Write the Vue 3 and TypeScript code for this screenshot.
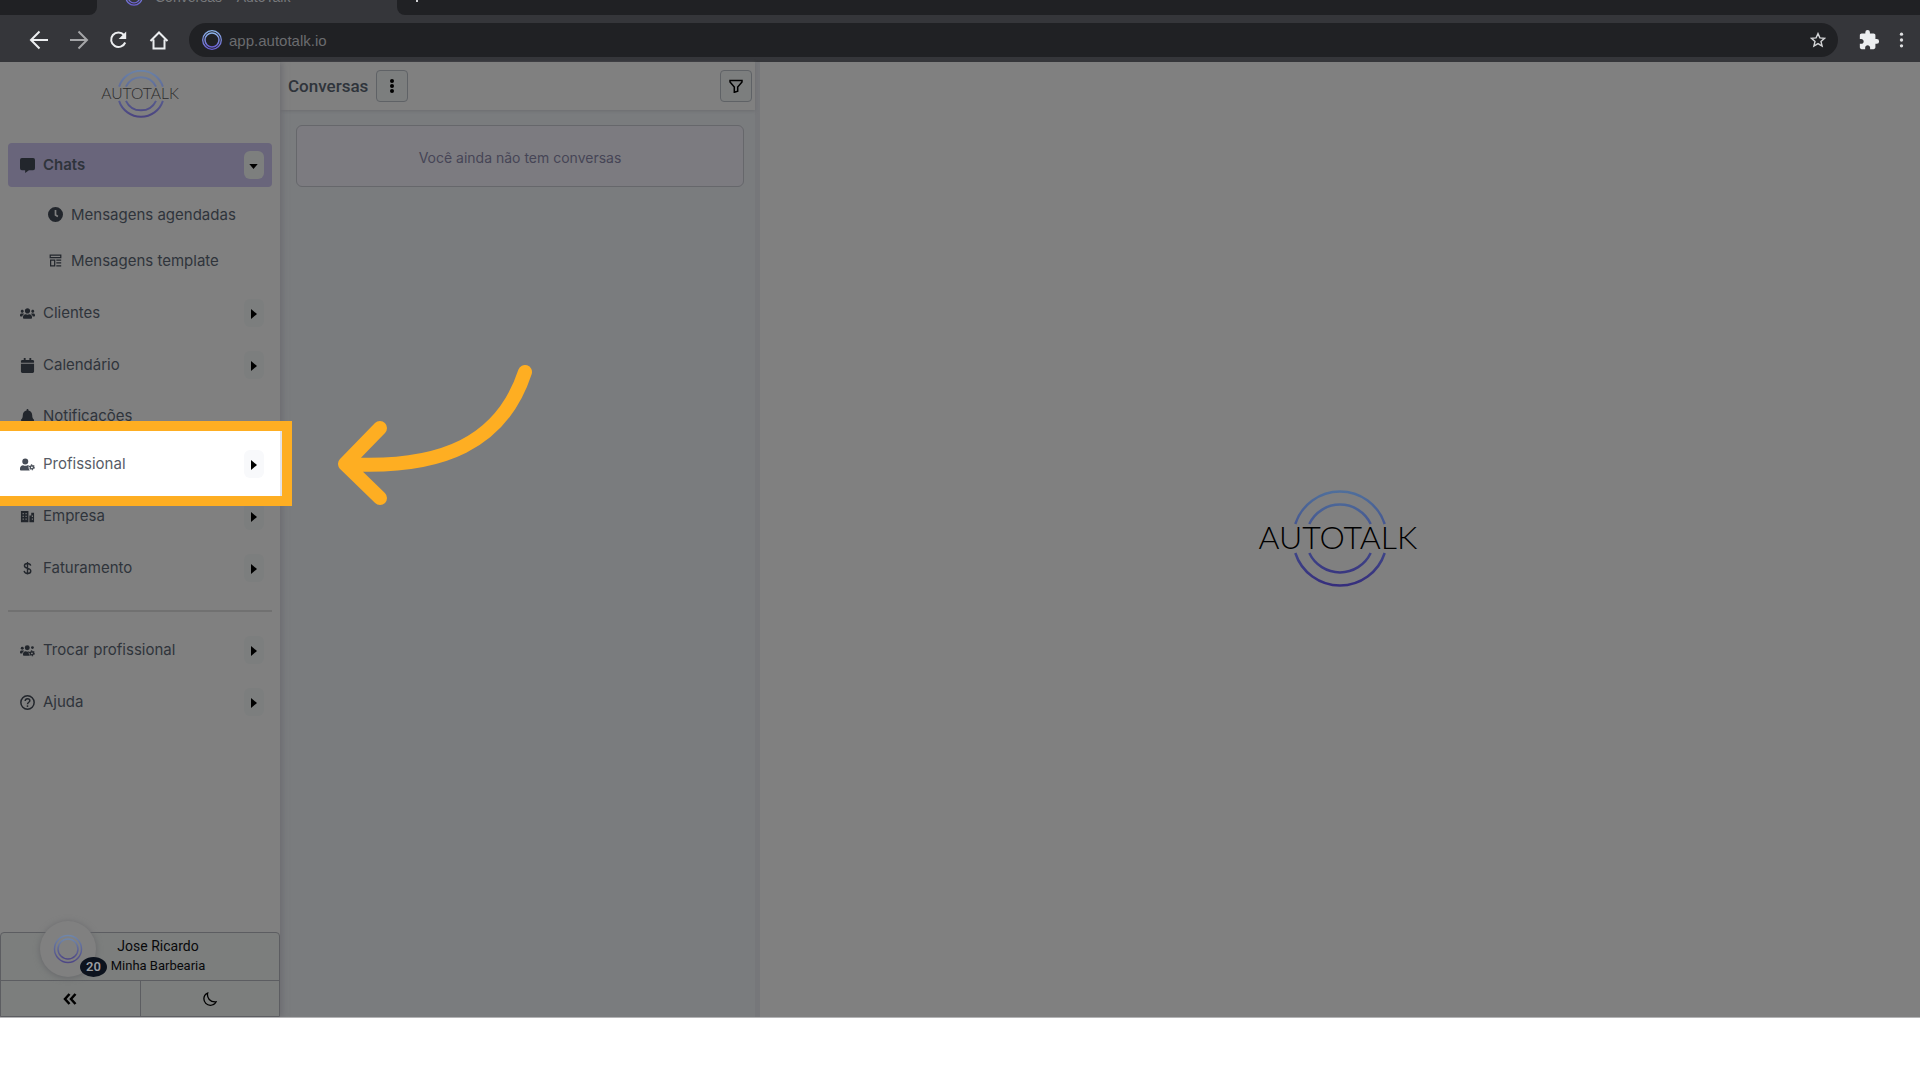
<script setup lang="ts">
import { ref } from 'vue'

interface MenuItem {
  label: string
  icon: string
  arrow: boolean
  spotlight?: boolean
}

const gear =
  '<circle cx="508" cy="376" r="68" fill="none" stroke="currentColor" stroke-width="56"/><circle cx="508" cy="376" r="106" fill="none" stroke="currentColor" stroke-width="44" stroke-dasharray="56 55"/>'

const icons: Record<string, { box: string; body: string }> = {
  chat: {
    box: '0 0 16 16',
    body: '<path d="M2 0h12a2 2 0 0 1 2 2v9a2 2 0 0 1-2 2H9.500L5.500 16v-3H2a2 2 0 0 1-2-2V2a2 2 0 0 1 2-2z"/>',
  },
  clock: {
    box: '0 0 16 16',
    body: '<path fill-rule="evenodd" d="M16 8A8 8 0 1 1 0 8a8 8 0 0 1 16 0zM7.100 3.200V9l3 1.800.9-1.500L8.900 8V3.200z"/>',
  },
  template: {
    box: '0 0 16 16',
    body: '<path fill="none" stroke="currentColor" stroke-width="1.500" d="M1.500 1.500h13v3h-13zM2 7.500h5v7H2zM9 7.500h6M9 11h6M9 14.500h6"/>',
  },
  users: {
    box: '0 0 640 512',
    body: '<path d="M96 224c35.300 0 64-28.700 64-64s-28.700-64-64-64-64 28.700-64 64 28.700 64 64 64zm448 0c35.300 0 64-28.700 64-64s-28.700-64-64-64-64 28.700-64 64 28.700 64 64 64zm32 32h-64c-17.600 0-33.500 7.100-45.100 18.600 40.300 22.100 68.900 62 75.100 109.400h66c17.700 0 32-14.300 32-32v-32c0-35.300-28.700-64-64-64zm-256 0c61.900 0 112-50.100 112-112S381.900 32 320 32 208 82.100 208 144s50.100 112 112 112zm76.800 32h-8.300c-20.800 10-43.900 16-68.500 16s-47.600-6-68.500-16h-8.300C179.600 288 128 339.600 128 403.200V432c0 26.500 21.500 48 48 48h288c26.500 0 48-21.500 48-48v-28.800c0-63.600-51.600-115.200-115.200-115.200zm-223.700-13.400C161.500 263.100 145.600 256 128 256H64c-35.300 0-64 28.700-64 64v32c0 17.700 14.300 32 32 32h65.900c6.300-47.400 34.900-87.300 75.200-109.400z"/>',
  },
  calendar: {
    box: '0 0 448 512',
    body: '<path d="M12 192h424c6.600 0 12 5.400 12 12v260c0 26.500-21.500 48-48 48H48c-26.500 0-48-21.500-48-48V204c0-6.600 5.400-12 12-12zm436-44v-36c0-26.500-21.500-48-48-48h-48V12c0-6.600-5.400-12-12-12h-40c-6.600 0-12 5.400-12 12v52H160V12c0-6.600-5.400-12-12-12h-40c-6.600 0-12 5.400-12 12v52H48c-26.500 0-48 21.500-48 48v36c0 6.600 5.400 12 12 12h424c6.600 0 12-5.400 12-12z"/>',
  },
  bell: {
    box: '0 0 448 512',
    body: '<path d="M224 512c35.300 0 64-28.700 64-64H160c0 35.300 28.700 64 64 64zm215.400-149.700c-19.300-20.800-55.500-52-55.500-154.300 0-77.700-54.500-139.900-127.900-155.200V32c0-17.700-14.300-32-32-32s-32 14.300-32 32v20.800C118.600 68.100 64.100 130.300 64.100 208c0 102.300-36.200 133.500-55.500 154.300-6 6.400-8.700 14.100-8.600 21.700.1 16.400 13 32 32.100 32h383.800c19.100 0 32-15.600 32.100-32 .1-7.600-2.600-15.300-8.600-21.700z"/>',
  },
  userGear: {
    box: '0 0 640 512',
    body:
      '<path d="M224 256a128 128 0 1 0 0-256 128 128 0 0 0 0 256zm-90 32C60 288 0 348 0 422v42c0 27 22 48 48 48h370c-28-30-52-78-52-136 0-34 6-60 16-82-20-6-40-6-60-6-62 30-136 28-188 0z"/>' +
      gear,
  },
  building: {
    box: '0 0 16 16',
    body: '<path fill-rule="evenodd" d="M1 2h8v12H1zM2.800 4.200v1.400H4V4.200zM5.900 4.200v1.400h1.200V4.200zM2.800 7.200v1.400H4V7.200zM5.900 7.200v1.400h1.200V7.200zM2.800 10.200v1.400H4v-1.400zM5.900 10.200v1.400h1.200v-1.400zM10 7h2V4h3v10h-5zM12.600 7v1.400h1.200V7zM12.600 10.200v1.400h1.200v-1.400z"/>',
  },
  dollar: {
    box: '0 0 16 16',
    body: '<path fill="none" stroke="currentColor" stroke-width="1.500" d="M8 1v13.500M11.400 5C11 3.200 9.800 2.600 8 2.600 6 2.600 4.700 3.500 4.700 5.100c0 3.800 6.800 1.800 6.800 5.500 0 1.700-1.400 2.700-3.500 2.700-2 0-3.300-.8-3.600-2.700"/>',
  },
  usersGear: {
    box: '0 0 640 512',
    body:
      '<circle cx="96" cy="160" r="62"/><circle cx="310" cy="134" r="106"/><circle cx="530" cy="130" r="60"/><path d="M64 256h64c18 0 34 7 45 19-40 22-69 62-75 109H32c-18 0-32-14-32-32v-32c0-35 29-64 64-64zM243 288c50 22 100 20 140 2-20 60-18 130 34 190H176c-26 0-48-21-48-48v-29c0-64 52-115 115-115z"/>' +
      gear,
  },
  help: {
    box: '0 0 16 16',
    body: '<g fill="none" stroke="currentColor" stroke-width="1.600"><circle cx="8" cy="8" r="7.100"/><path d="M5.500 6.400C5.600 4.800 6.500 4 8 4s2.500.8 2.500 2.100C10.500 7.800 8 7.700 8 9.800"/></g><circle cx="8" cy="11.800" r="1"/>',
  },
}

const subItems = [
  { label: 'Mensagens agendadas', icon: 'clock' },
  { label: 'Mensagens template', icon: 'template' },
]

const mainItems: MenuItem[] = [
  { label: 'Clientes', icon: 'users', arrow: true },
  { label: 'Calendário', icon: 'calendar', arrow: true },
  { label: 'Notificações', icon: 'bell', arrow: false },
  { label: 'Profissional', icon: 'userGear', arrow: true, spotlight: true },
  { label: 'Empresa', icon: 'building', arrow: true },
  { label: 'Faturamento', icon: 'dollar', arrow: true },
]

const extraItems: MenuItem[] = [
  { label: 'Trocar profissional', icon: 'usersGear', arrow: true },
  { label: 'Ajuda', icon: 'help', arrow: true },
]

const groups = [mainItems, extraItems]
const address = ref('app.autotalk.io')
</script>

<template>
  <div class="page">
    <svg class="defs" aria-hidden="true">
      <defs>
        <linearGradient id="ringBright" x1="0" y1="0" x2="0" y2="1">
          <stop offset="0" stop-color="#8db4ea" />
          <stop offset="1" stop-color="#6a5fd0" />
        </linearGradient>
        <linearGradient id="ringSoft" x1="0" y1="0" x2="0" y2="1">
          <stop offset="0" stop-color="#6f86aa" />
          <stop offset="1" stop-color="#4e4785" />
        </linearGradient>
        <linearGradient id="ringDeep" gradientUnits="userSpaceOnUse" x1="0" y1="0" x2="0" y2="97">
          <stop offset="0" stop-color="#4f6f9c" />
          <stop offset="1" stop-color="#352d7c" />
        </linearGradient>
        <linearGradient id="ringSmall" gradientUnits="userSpaceOnUse" x1="0" y1="0" x2="0" y2="97">
          <stop offset="0" stop-color="#6b83a8" />
          <stop offset="1" stop-color="#4a437f" />
        </linearGradient>
      </defs>
    </svg>

    <header class="browser">
      <div class="tabs">
        <div class="tab-left"></div>
        <div class="tab-active">
          <svg class="tab-icon" viewBox="0 0 20 20" fill="none" stroke="url(#ringBright)">
            <circle cx="10" cy="10" r="9" stroke-width="1.500" />
            <circle cx="10" cy="10" r="6.500" stroke-width="1.500" />
          </svg>
          <span>Conversas – AutoTalk</span>
        </div>
        <div class="tab-rest">
          <svg viewBox="0 0 14 14" width="14" height="14" stroke="#d0d1d3" stroke-width="2"><path d="M7 0v14M0 7h14" /></svg>
        </div>
      </div>
      <div class="toolbar">
        <button class="nav" aria-label="Voltar">
          <svg viewBox="0 0 20 20"><path d="M19 10H2.500M10.500 1.500L2 10l8.500 8.500" /></svg>
        </button>
        <button class="nav dim" aria-label="Avançar">
          <svg viewBox="0 0 20 20"><path d="M1 10h16.500M9.500 1.500L18 10l-8.500 8.500" /></svg>
        </button>
        <button class="nav" aria-label="Recarregar">
          <svg viewBox="0 0 20 20"><path d="M15 5A7.300 7.300 0 1 0 16.200 12.500" /><path class="solid" d="M17.200 1.500v7.500H9.700z" /></svg>
        </button>
        <button class="nav" aria-label="Página inicial">
          <svg viewBox="0 0 20 20"><path d="M4.500 9.500v9h11v-9M1.500 11L10 2.500l8.500 8.500" /></svg>
        </button>
        <label class="omnibox">
          <svg class="site" viewBox="0 0 20 20" fill="none" stroke="url(#ringBright)">
            <circle cx="10" cy="10" r="9.300" stroke-width="1.300" />
            <circle cx="10" cy="10" r="7" stroke-width="1.500" />
          </svg>
          <input v-model="address" type="text" aria-label="Endereço" />
          <svg class="star" viewBox="0 0 16 16"><path d="M8 1.600l1.900 4.300 4.600.4-3.500 3.100 1.100 4.600L8 11.600 3.900 14 5 9.400 1.500 6.300l4.600-.4z" /></svg>
        </label>
        <svg class="puzzle" viewBox="0 0 24 24"><path d="M20.500 11H19V7c0-1.100-.9-2-2-2h-4V3.500a2.500 2.500 0 0 0-5 0V5H4c-1.100 0-2 .9-2 2v3.800h1.500c1.500 0 2.700 1.200 2.700 2.700S5 16.200 3.500 16.200H2V20c0 1.100.9 2 2 2h3.800v-1.500c0-1.500 1.200-2.700 2.700-2.700s2.700 1.200 2.700 2.700V22H17c1.100 0 2-.9 2-2v-4h1.500a2.500 2.500 0 0 0 0-5z" /></svg>
        <svg class="kebab" viewBox="0 0 6 20"><circle cx="3" cy="3" r="2" /><circle cx="3" cy="10" r="2" /><circle cx="3" cy="17" r="2" /></svg>
      </div>
    </header>

    <div class="app">
      <aside class="sidebar">
        <svg class="logo small" viewBox="0 0 160 98" role="img" aria-label="Autotalk">
          <g fill="none" stroke="url(#ringSmall)" stroke-width="4">
            <path d="M37.300 34A47 47 0 0 1 126.700 34M51.300 34A34 34 0 0 1 112.700 34M37.300 63A47 47 0 0 0 126.700 63M51.300 63A34 34 0 0 0 112.700 63" />
          </g>
          <text x="80" y="59" text-anchor="middle">AUTOTALK</text>
        </svg>

        <nav class="menu">
          <a class="item active" href="#chats">
            <svg class="icon" :viewBox="icons.chat.box" v-html="icons.chat.body"></svg>
            <span class="label">Chats</span>
            <button class="toggle" aria-label="Recolher Chats">
              <svg viewBox="0 0 10 6" width="9" height="5"><path d="M0 0h10L5 6z" /></svg>
            </button>
          </a>
          <div class="sub">
            <a v-for="s in subItems" :key="s.label" class="sub-item" href="#mensagens">
              <svg class="icon" :class="s.icon" :viewBox="icons[s.icon].box" v-html="icons[s.icon].body"></svg>
              <span class="label">{{ s.label }}</span>
            </a>
          </div>
          <template v-for="(group, g) in groups" :key="g">
            <hr v-if="g > 0" />
            <a
              v-for="m in group"
              :key="m.label"
              class="item"
              :class="{ spotlight: m.spotlight, short: !m.arrow }"
              href="#menu"
            >
              <svg class="icon" :class="m.icon" :viewBox="icons[m.icon].box" v-html="icons[m.icon].body"></svg>
              <span class="label">{{ m.label }}</span>
              <button v-if="m.arrow" class="toggle" :aria-label="'Expandir ' + m.label">
                <svg viewBox="0 0 6 10" width="6" height="10"><path d="M0 0v10l6-5z" /></svg>
              </button>
            </a>
          </template>
        </nav>

        <div class="account">
          <div class="profile">
            <button class="bubble" aria-label="Novidades">
              <svg viewBox="0 0 30 30" width="30" height="30" fill="none" stroke="url(#ringSoft)" stroke-width="1.500">
                <circle cx="15" cy="15" r="13.500" />
                <circle cx="15" cy="15" r="10" />
              </svg>
              <span class="badge">20</span>
            </button>
            <div class="names">
              <span class="person">Jose Ricardo</span>
              <span class="company">Minha Barbearia</span>
            </div>
          </div>
          <div class="actions">
            <button aria-label="Recolher menu">
              <svg viewBox="0 0 14 12" width="14" height="12" fill="none" stroke="#000" stroke-width="2.500"><path d="M6.500 1L2 6l4.500 5M12.500 1L8 6l4.500 5" /></svg>
            </button>
            <button aria-label="Modo escuro">
              <svg viewBox="0 0 16 16" width="14" height="14" fill="none" stroke="#000" stroke-width="1.500"><path d="M5.300 1.200C4.200 6.800 8 11.800 15 11.200 13.600 13.700 11.200 15.200 8.400 15.200 4.300 15.200 1 11.900 1 7.800 1 5 2.700 2.300 5.300 1.200z" /></svg>
            </button>
          </div>
        </div>
      </aside>

      <section class="panel">
        <div class="panel-head">
          <h1>Conversas</h1>
          <button class="square" aria-label="Opções">
            <svg viewBox="0 0 4 14" width="4" height="14"><circle cx="2" cy="2" r="2" /><circle cx="2" cy="7" r="2" /><circle cx="2" cy="12" r="2" /></svg>
          </button>
          <button class="square filter" aria-label="Filtrar">
            <svg viewBox="0 0 14 14" width="14" height="14" fill="none" stroke="#000" stroke-width="1.500"><path d="M1 1.500h12v1.500L8.700 8v4.300l-3.400 1V8L1 3z" /></svg>
          </button>
        </div>
        <div class="list">
          <p class="empty">Você ainda não tem conversas</p>
        </div>
        <svg class="pointer" viewBox="0 0 196 144" width="196" height="144" aria-hidden="true">
          <path d="M188 10C165 80 106 108 8 102M43 66L8 102L43 136" />
        </svg>
      </section>

      <main class="stage">
        <svg class="logo large" viewBox="0 0 160 98" role="img" aria-label="Autotalk">
          <g fill="none" stroke="url(#ringDeep)" stroke-width="2.500">
            <path d="M37.300 34A47 47 0 0 1 126.700 34M51.300 34A34 34 0 0 1 112.700 34M37.300 63A47 47 0 0 0 126.700 63M51.300 63A34 34 0 0 0 112.700 63" />
          </g>
          <text x="80" y="59" text-anchor="middle">AUTOTALK</text>
        </svg>
      </main>
    </div>
    <div class="bottom"></div>
  </div>
</template>

<style>
body {
  margin: 0;
  background: #fff;
  overflow: hidden;
}
</style>

<style scoped>
* {
  box-sizing: border-box;
}
.page {
  min-height: 100vh;
  display: flex;
  flex-direction: column;
  overflow: hidden;
  font-family: Inter, 'Liberation Sans', sans-serif;
  color: #2f343b;
}
button {
  padding: 0;
  border: 0;
  background: none;
  font: inherit;
  color: inherit;
  display: flex;
  align-items: center;
  justify-content: center;
}
a {
  color: inherit;
  text-decoration: none;
}
.defs {
  position: absolute;
  width: 0;
  height: 0;
}
.browser {
  background: #35363a;
  font-family: 'Liberation Sans', Arial, sans-serif;
}
.tabs {
  display: flex;
  height: 41px;
  margin-top: -26px;
}
.tab-left {
  width: 97px;
  background: #202124;
  border-radius: 0 0 8px 0;
}
.tab-active {
  width: 300px;
  display: flex;
  align-items: center;
  gap: 12px;
  padding: 4px 28px 0;
  font-size: 14px;
  color: #77797c;
}
.tab-icon {
  width: 18px;
  height: 18px;
}
.tab-rest {
  flex: 1;
  display: flex;
  align-items: center;
  padding-left: 13px;
  background: #202124;
  border-radius: 0 0 0 8px;
}
.toolbar {
  height: 47px;
  display: flex;
  align-items: center;
  gap: 20px;
  padding: 3px 16px 0 29px;
}
.nav svg {
  width: 20px;
  height: 20px;
  fill: none;
  stroke: #eceef0;
  stroke-width: 2;
}
.nav .solid {
  fill: #eceef0;
  stroke: none;
}
.nav.dim svg {
  stroke: #a5a6a8;
}
.omnibox {
  flex: 1;
  height: 34px;
  display: flex;
  align-items: center;
  gap: 7px;
  padding: 0 12px 0 13px;
  border-radius: 17px;
  background: #202124;
}
.site {
  width: 20px;
  height: 20px;
}
.omnibox input {
  flex: 1;
  min-width: 0;
  padding: 0;
  border: 0;
  outline: 0;
  background: none;
  color: #6b6c6f;
  font: 15px 'Liberation Sans', Arial, sans-serif;
}
.star {
  width: 16px;
  height: 16px;
  fill: none;
  stroke: #d4d5d7;
  stroke-width: 1.4;
}
.puzzle {
  width: 22px;
  height: 22px;
  margin-right: -1px;
  fill: #eceef0;
}
.kebab {
  width: 5px;
  height: 18px;
  fill: #dedfe1;
}
.app {
  flex: 1;
  display: flex;
  background: #808080;
  border-bottom: 1px solid #b4b4b6;
}
.sidebar {
  position: relative;
  z-index: 2;
  width: 280px;
  flex: none;
  display: flex;
  flex-direction: column;
  background: #808080;
  box-shadow: 2px 0 6px #6b6b70;
  clip-path: inset(0 -24px 0 0);
}
.logo text {
  font-family: Lato, sans-serif;
  font-weight: 300;
  font-size: 32px;
}
.logo.small {
  width: 80px;
  height: 48px;
  margin: 8px auto 0;
}
.logo.small text {
  fill: #2c2c2c;
}
.menu {
  display: flex;
  flex-direction: column;
  gap: 8px;
  padding: 25px 8px 0;
  font-size: 15px;
}
.item {
  height: 44px;
  display: flex;
  align-items: center;
  gap: 8px;
  padding: 0 8px 0 12px;
  border-radius: 4px;
}
.item.short {
  height: 39px;
  padding-top: 4px;
}
.item .label {
  flex: 1;
  padding-bottom: 2px;
}
.item.active {
  background: #69657b;
  font-weight: 600;
}
.icon {
  width: 15px;
  height: 15px;
  flex: none;
  fill: currentColor;
  color: #22262c;
}
.icon.template {
  width: 13px;
  height: 13px;
  margin: 0 1px;
}
.toggle {
  width: 20px;
  height: 28px;
  padding: 2px 1px 0 0;
  border-radius: 6px;
  background: #7c7e7e;
}
.toggle svg {
  fill: #000;
}
.active .toggle {
  background: #7d7f7e;
}
.sub {
  margin: -4px 0 0;
}
.sub-item {
  height: 46px;
  display: flex;
  align-items: center;
  gap: 8px;
  padding-left: 40px;
}
.spotlight {
  position: relative;
  z-index: 1;
}
.spotlight::before {
  content: '';
  position: absolute;
  z-index: -1;
  inset: -21px -20px -20px -18px;
  border: 10px solid #feae22;
  background: linear-gradient(to left, #e2e3e8 2px, #fff 2px);
}
.spotlight .label {
  color: #575c66;
}
.spotlight .icon {
  color: #464c56;
}
.spotlight .toggle {
  background: #f8f9fb;
}
hr {
  width: 100%;
  height: 2px;
  margin: 12px 0 8px;
  border: 0;
  background: #717171;
}
.account {
  margin-top: auto;
  border: 1px solid #5c5d61;
  border-radius: 4px 4px 0 0;
  background: #7c7e7d;
  color: #08090b;
  font-family: Roboto, sans-serif;
}
.profile {
  position: relative;
  height: 47px;
  display: flex;
  justify-content: center;
  padding-left: 36px;
}
.names {
  display: flex;
  flex-direction: column;
  align-items: center;
  padding-top: 3px;
}
.person {
  font-size: 14px;
  line-height: 20px;
}
.company {
  font-size: 13px;
  line-height: 20px;
}
.bubble {
  position: absolute;
  left: 39px;
  top: -12px;
  width: 56px;
  height: 56px;
  border-radius: 50%;
  background: #808080;
  box-shadow: 0 1px 6px #66676a;
}
.badge {
  position: absolute;
  right: -11px;
  bottom: 0;
  width: 27px;
  height: 20px;
  border-radius: 50%;
  background: #0c121d;
  color: #9a9da1;
  font-size: 13px;
  font-weight: 600;
  line-height: 20px;
}
.actions {
  display: flex;
  height: 36px;
  border-top: 1px solid #5c5d61;
}
.actions button {
  flex: 1;
}
.actions button + button {
  border-left: 1px solid #5c5d61;
}
.panel {
  position: relative;
  width: 480px;
  flex: none;
  display: flex;
  flex-direction: column;
  background: #7a7c7e;
  border-right: 5px solid #76777a;
}
.panel-head {
  height: 48px;
  display: flex;
  align-items: center;
  gap: 8px;
  padding: 0 3px 0 8px;
  background: #808080;
  box-shadow: 0 1px 3px #6c6d70;
}
h1 {
  margin: 0;
  font-family: Roboto, sans-serif;
  font-size: 17px;
  font-weight: 500;
}
.square {
  width: 32px;
  height: 32px;
  border: 1px solid #5f6266;
  border-radius: 4px;
  background: #7c7e7e;
}
.filter {
  margin-left: auto;
}
.list {
  padding: 15px 11px 0 16px;
}
.empty {
  margin: 0;
  padding: 22px 0 18px;
  border: 1px solid #66676b;
  border-radius: 6px;
  background: #7c7b80;
  color: #464556;
  font-size: 14px;
  line-height: 20px;
  text-align: center;
}
.pointer {
  position: absolute;
  left: 57px;
  top: 300px;
  fill: none;
  stroke: #feae22;
  stroke-width: 14;
  stroke-linecap: round;
  stroke-linejoin: round;
}
.stage {
  flex: 1;
  display: flex;
  align-items: center;
  justify-content: center;
  padding: 0 4px 2px 0;
}
.logo.large {
  width: 160px;
  height: 98px;
}
.bottom {
  height: 62px;
  background: #fff;
}
</style>
